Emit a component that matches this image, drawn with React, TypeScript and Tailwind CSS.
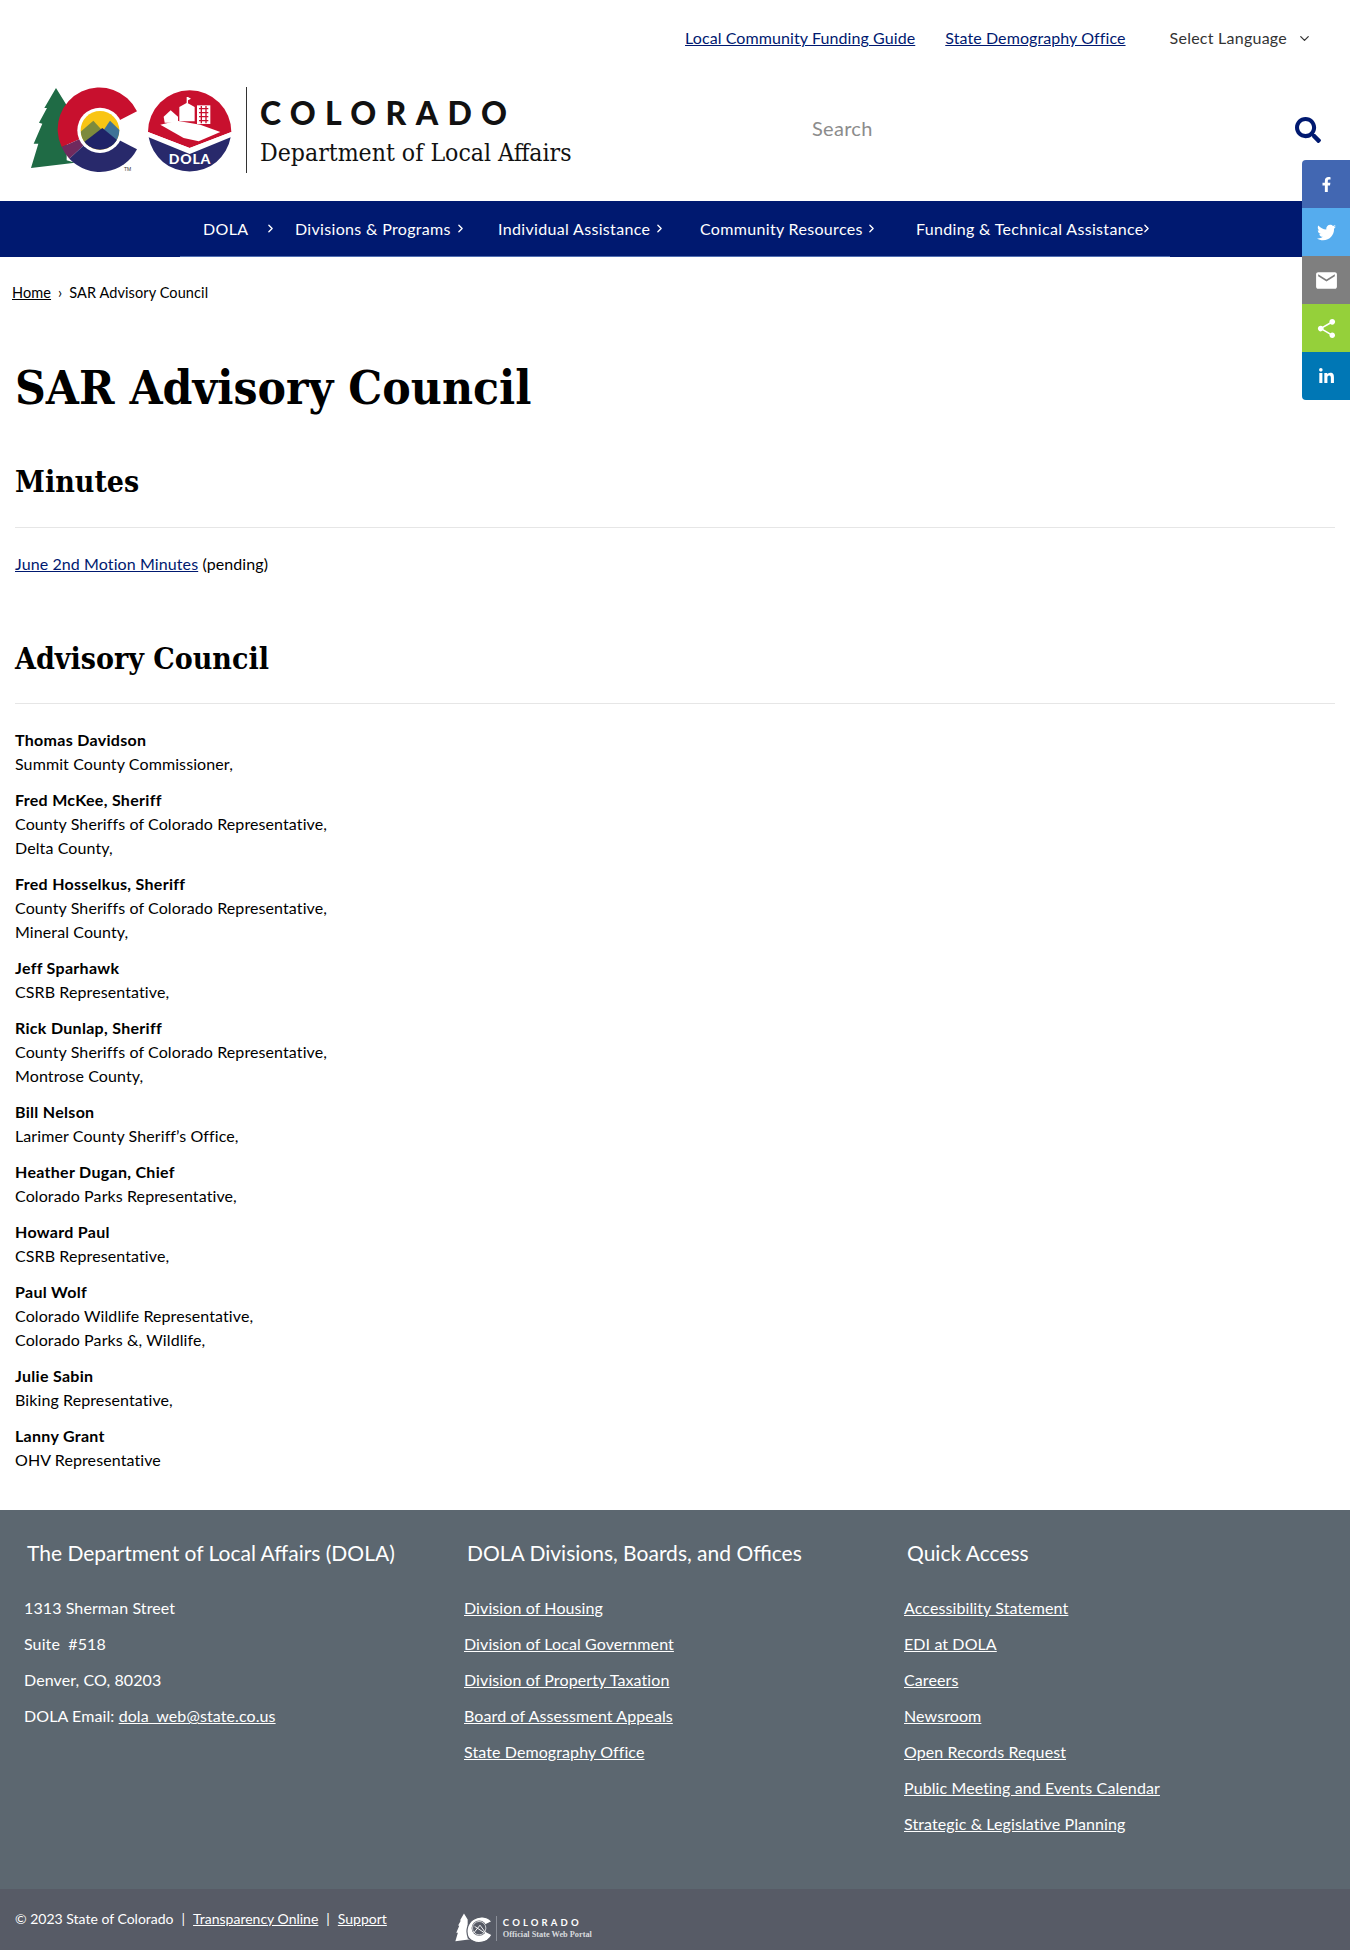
import { ChevronDown, ChevronRight } from "lucide-react";
import { FaFacebookF, FaLinkedinIn, FaSearch, FaTwitter } from "react-icons/fa";
import { MdEmail, MdShare } from "react-icons/md";

const sans = "font-['Lato','Noto_Sans',sans-serif]";
const slab = "font-['DejaVu_Serif_Condensed','DejaVu_Serif',serif]";

const navItems = [
  { label: "DOLA", className: "w-[92px]", chevron: "ml-[16px]" },
  { label: "Divisions & Programs", className: "w-[203px]", chevron: "ml-[3px]" },
  { label: "Individual Assistance", className: "w-[202px]", chevron: "ml-[3px]" },
  { label: "Community Resources", className: "w-[216px]", chevron: "ml-[2px]" },
  { label: "Funding & Technical Assistance", className: "w-[240px]", chevron: "-ml-[4px]" },
];

const members = [
  { name: "Thomas Davidson", lines: ["Summit County Commissioner,"] },
  { name: "Fred McKee, Sheriff", lines: ["County Sheriffs of Colorado Representative,", "Delta County,"] },
  { name: "Fred Hosselkus, Sheriff", lines: ["County Sheriffs of Colorado Representative,", "Mineral County,"] },
  { name: "Jeff Sparhawk", lines: ["CSRB Representative,"] },
  { name: "Rick Dunlap, Sheriff", lines: ["County Sheriffs of Colorado Representative,", "Montrose County,"] },
  { name: "Bill Nelson", lines: ["Larimer County Sheriff’s Office,"] },
  { name: "Heather Dugan, Chief", lines: ["Colorado Parks Representative,"] },
  { name: "Howard Paul", lines: ["CSRB Representative,"] },
  { name: "Paul Wolf", lines: ["Colorado Wildlife Representative,", "Colorado Parks &, Wildlife,"] },
  { name: "Julie Sabin", lines: ["Biking Representative,"] },
  { name: "Lanny Grant", lines: ["OHV Representative"] },
];

const divisions = [
  "Division of Housing",
  "Division of Local Government",
  "Division of Property Taxation",
  "Board of Assessment Appeals",
  "State Demography Office",
];

const quickAccess = [
  "Accessibility Statement",
  "EDI at DOLA",
  "Careers",
  "Newsroom",
  "Open Records Request",
  "Public Meeting and Events Calendar",
  "Strategic & Legislative Planning",
];

const treePath = "M93 18 L125 70 L125 235 L150 242 L18 258 L40 185 L26 185 L52 125 L42 122 L66 78 L58 78 Z";

function ColoradoLogo() {
  return (
    <svg width="215" height="96" viewBox="0 0 215 96" className="shrink-0">
      <defs>
        <clipPath id="emblem">
          <circle cx="225" cy="145" r="58" />
        </clipPath>
      </defs>
      <g transform="scale(0.3333)">
        <path d={treePath} fill="#1f6b45" />
        {/* C */}
        <path d="M336 88 A125 125 0 0 0 110 195 L225 145 Z" fill="#c8102e" />
        <path d="M110 195 A125 125 0 0 0 133 230 L225 145 Z" fill="#6f2a5e" />
        <path d="M133 230 A125 125 0 0 0 336 202 L225 145 Z" fill="#28296b" />
        <circle cx="225" cy="145" r="68" fill="#ffffff" />
        <g clipPath="url(#emblem)">
          <rect x="160" y="80" width="130" height="130" fill="#f9c513" />
          <path d="M160 155 L205 116 L236 150 L190 200 L160 200 Z" fill="#7d8a3d" />
          <path d="M232 150 L255 116 L295 155 L295 200 L260 200 Z" fill="#3f7397" />
          <path d="M165 190 L232 138 L295 190 L295 210 L165 210 Z" fill="#1f2368" />
        </g>
        <text x="297" y="268" fontSize="15" fill="#333333" fontFamily="Liberation Sans">TM</text>
      </g>
      {/* DOLA seal */}
      <g transform="translate(117 0) scale(0.3333)">
        <path d="M18 150 A125 125 0 1 1 268 150 L143 198 Z" fill="#c8102e" />
        <path d="M18 150 L143 198 L268 150 L266 166 L143 216 L20 166 Z" fill="#ffffff" />
        <path d="M20 166 L143 216 L266 166 A125 125 0 0 1 20 166 Z" fill="#28296b" />
        <path d="M55 128 L105 116 L175 128 L235 150 L170 178 L125 168 Z" fill="#ffffff" />
        <path d="M65 104 L86 85 L108 104 L108 122 L68 122 Z" fill="#ffffff" />
        <path d="M112 75 L135 62 L158 75 L158 118 L112 118 Z" fill="#ffffff" />
        <path d="M134 45 H138 V64 H134 Z M138 45 L147 50 L138 55 Z" fill="#ffffff" />
        <rect x="165" y="70" width="40" height="56" fill="#ffffff" />
        <path d="M171 80 H199 M171 92 H199 M171 104 H199 M171 116 H199 M178 72 V124 M192 72 V124" stroke="#c8102e" strokeWidth="4" />
      </g>
      <text x="165" y="82" textAnchor="middle" fontSize="14" fontWeight="900" fill="#ffffff" fontFamily="Lato" letterSpacing="0.8">DOLA</text>
    </svg>
  );
}

function FooterLogo() {
  return (
    <div className="ml-[68px] mt-[18px] flex items-center">
      <svg width="38" height="30" viewBox="15 15 330 258" className="shrink-0">
        <path d={treePath} fill="#ffffff" />
        <path d="M336 88 A125 125 0 0 0 133 230 A125 125 0 0 0 336 202 L225 145 Z" fill="#ffffff" stroke="#575b66" strokeWidth="10" />
        <circle cx="225" cy="145" r="66" fill="#575b66" />
        <circle cx="225" cy="145" r="58" fill="none" stroke="#ffffff" strokeWidth="6" />
        <path d="M175 190 L232 120 L285 190 M185 130 L270 185" stroke="#ffffff" strokeWidth="8" fill="none" />
      </svg>
      <div className="ml-[3px] border-l border-[#8a8e98] pl-[6px] leading-none text-white">
        <div className="font-['Lato',sans-serif] text-[9.5px] font-bold leading-[13px] tracking-[0.33em]">COLORADO</div>
        <div className="font-['Liberation_Serif',serif] text-[8.3px] font-bold leading-[12px] text-[#d8dade]">Official State Web Portal</div>
      </div>
    </div>
  );
}

export default function App() {
  return (
    <div className={`relative min-h-[1950px] bg-white text-[16px] leading-[24px] tracking-[0.1px] text-black ${sans}`}>
      {/* Share bar */}
      <div className="absolute right-0 top-[160px] w-[48px] overflow-hidden rounded-l-[4px] text-white">
        <div className="flex h-[48px] items-center justify-center bg-[#4267b2]"><FaFacebookF size={15} /></div>
        <div className="flex h-[48px] items-center justify-center bg-[#55acee]"><FaTwitter size={19} /></div>
        <div className="flex h-[48px] items-center justify-center bg-[#7f7f7f]"><MdEmail size={25} /></div>
        <div className="flex h-[48px] items-center justify-center bg-[#95d03a]"><MdShare size={23} /></div>
        <div className="flex h-[48px] items-center justify-center bg-[#0077b5]"><FaLinkedinIn size={17} /></div>
      </div>

      <header>
        {/* Top links */}
        <div className="flex h-[76px] items-center justify-end pr-[38px]">
          <a href="#" className="tracking-[0.09px] text-[#001970] underline">Local Community Funding Guide</a>
          <a href="#" className="ml-[30px] tracking-[0.09px] text-[#001970] underline">State Demography Office</a>
          <span className="ml-[44px] tracking-[0.25px] text-[#333333]">Select Language</span>
          <ChevronDown size={15} strokeWidth={2} className="ml-[10px] text-[#333333]" />
        </div>

        {/* Logo and search */}
        <div className="flex h-[125px] items-start pl-[25px]">
          <div className="mt-[6px] flex w-[787px] items-center">
            <ColoradoLogo />
            <div className="ml-[6px] h-[86px] w-px bg-[#333333]" />
            <div className="ml-[13px] pt-[4px]">
              <div className="font-['Lato',sans-serif] text-[32px] font-black leading-[34px] tracking-[0.29em] text-[#111111]">COLORADO</div>
              <div className={`mt-[8px] text-[24.6px] leading-[30px] tracking-normal text-[#111111] ${slab}`}>Department of Local Affairs</div>
            </div>
          </div>
          <div className="mt-[37px] text-[20px] leading-[30px] tracking-[0.3px] text-[#8c8c8c]">Search</div>
          <FaSearch size={26} className="ml-auto mr-[29px] mt-[41px] text-[#001970]" />
        </div>
      </header>

      {/* Main nav */}
      <nav className="h-[56px] bg-[#001970] text-white">
        <div className="ml-[180px] flex h-[56px] w-[990px] items-center border-b border-[#4f6db0] pl-[23px] tracking-[0.33px]">
          {navItems.map((item) => (
            <a key={item.label} href="#" className={`flex shrink-0 items-center whitespace-nowrap ${item.className}`}>
              {item.label}
              <ChevronRight size={13} strokeWidth={2.5} className={item.chevron} />
            </a>
          ))}
        </div>
      </nav>

      {/* Breadcrumb */}
      <div className="mt-[24px] flex h-[24px] items-center pl-[12px] text-[14.5px]">
        <a href="#" className="underline">Home</a>
        <span className="mx-[7px]">›</span>
        <span>SAR Advisory Council</span>
      </div>

      <main className="px-[15px]">
        <h1 className={`mt-[49px] text-[47.5px] font-bold leading-[66px] tracking-normal ${slab}`}>SAR Advisory Council</h1>

        <h2 className={`mt-[42px] text-[30px] font-bold leading-[40px] tracking-normal ${slab}`}>Minutes</h2>
        <hr className="mt-[25px] border-[#e6e6e6]" />
        <p className="mt-[24px]">
          <a href="#" className="text-[#001970] underline">June 2nd Motion Minutes</a> (pending)
        </p>

        <h2 className={`mt-[63px] text-[30px] font-bold leading-[40px] tracking-normal ${slab}`}>Advisory Council</h2>
        <hr className="mt-[24px] border-[#e6e6e6]" />
        <div className="mt-[24px] flex flex-col gap-[12px] pb-[38px]">
          {members.map((m) => (
            <p key={m.name}>
              <strong className="font-bold tracking-[0.3px]">{m.name}</strong>
              {m.lines.map((line) => (
                <span key={line} className="block">{line}</span>
              ))}
            </p>
          ))}
        </div>
      </main>

      <footer className="text-white">
        <div className="grid h-[379px] grid-cols-[440px_440px_1fr] bg-[#5c6770] pl-[24px] pt-[28px]">
          <div>
            <h3 className="ml-[3px] text-[21px] leading-[30px] tracking-normal text-white">The Department of Local Affairs (DOLA)</h3>
            <div className="mt-[28px] flex flex-col gap-[12px]">
              <span>1313 Sherman Street</span>
              <span>Suite &nbsp;#518</span>
              <span>Denver, CO, 80203</span>
              <span>DOLA Email: <a href="#" className="underline">dola_web@state.co.us</a></span>
            </div>
          </div>
          <div>
            <h3 className="ml-[3px] text-[21px] leading-[30px] tracking-normal text-white">DOLA Divisions, Boards, and Offices</h3>
            <div className="mt-[28px] flex flex-col items-start gap-[12px]">
              {divisions.map((d) => <a key={d} href="#" className="underline">{d}</a>)}
            </div>
          </div>
          <div>
            <h3 className="ml-[3px] text-[21px] leading-[30px] tracking-normal text-white">Quick Access</h3>
            <div className="mt-[28px] flex flex-col items-start gap-[12px]">
              {quickAccess.map((q) => <a key={q} href="#" className="underline">{q}</a>)}
            </div>
          </div>
        </div>
        <div className="flex h-[62px] items-center bg-[#575b66] pb-[2px] pl-[15px] text-[14px] tracking-normal">
          <span>© 2023 State of Colorado</span>
          <span className="mx-[8px]">|</span>
          <a href="#" className="underline">Transparency Online</a>
          <span className="mx-[8px]">|</span>
          <a href="#" className="underline">Support</a>
          <FooterLogo />
        </div>
      </footer>
    </div>
  );
}
